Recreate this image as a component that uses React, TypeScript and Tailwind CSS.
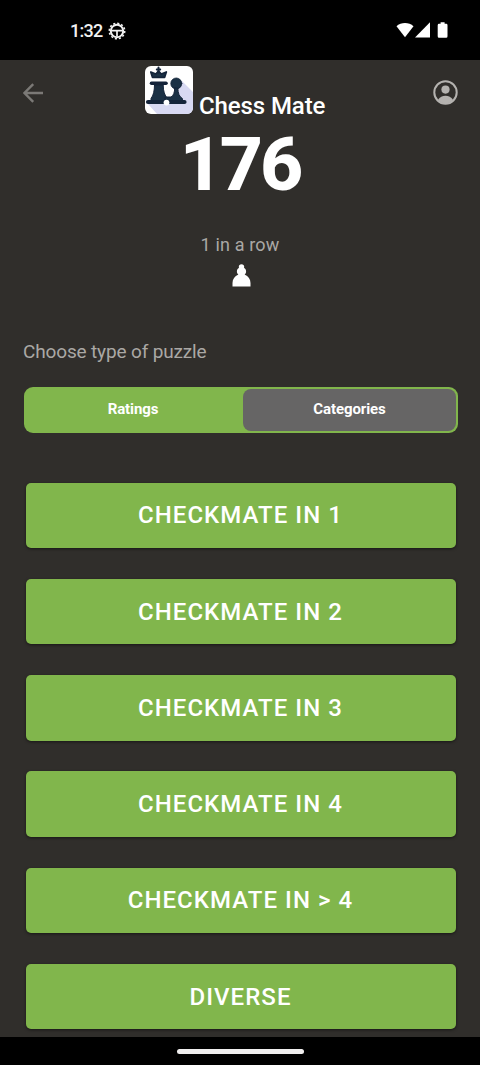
import React, { useState } from 'react';

const categories = [
  'Checkmate in 1',
  'Checkmate in 2',
  'Checkmate in 3',
  'Checkmate in 4',
  'Checkmate in > 4',
  'Diverse',
];

const StatusBar: React.FC = () => (
  <div className="h-[60px] shrink-0 bg-black flex items-center justify-between pl-[70px] pr-8 text-[#f1f1f1]">
    <div className="flex items-center gap-[6px] pt-px">
      <span className="text-[18px] leading-6 font-medium w-[32px] whitespace-nowrap tracking-[-0.7px]">1:32</span>
      <svg className="h-[18px] w-[18px]" viewBox="0 0 18 18" fill="none" stroke="currentColor">
        <circle cx="9" cy="9" r="6.2" strokeWidth="2" />
        <circle cx="9" cy="9" r="7.7" strokeWidth="1.6" strokeDasharray="2.1 1.93" />
        <path d="M3.2 8.6h11.6M9 9v5.5" strokeWidth="1.7" />
      </svg>
    </div>
    <svg className="h-4 w-[52px]" viewBox="0 0 52 16" fill="#fff">
      <path d="M9 15.2 0.5 4.3C5 0 13 0 17.5 4.3Z" />
      <path d="M34 0.2V15.5H19Z" />
      <path d="M44.6 0.2h4v1.6h1.6q1.3 0 1.3 1.4v11q0 1.5-1.3 1.5h-7.2q-1.3 0-1.3-1.5v-11q0-1.4 1.3-1.4h1.6z" />
    </svg>
  </div>
);

const Logo: React.FC = () => (
  <svg className="h-12 w-12 shrink-0" viewBox="0 0 48 48">
    <defs>
      <clipPath id="tile">
        <rect width="48" height="48" rx="6" />
      </clipPath>
    </defs>
    <g clipPath="url(#tile)">
      <rect width="48" height="48" fill="#fff" />
      <path d="M37 15 48 26V48H12L3 38 30 35z" fill="#d8d9f2" />
      <g fill="#1b3145" stroke="#14243a" strokeLinejoin="round" strokeLinecap="round">
        <path d="M7.5 11.3 5.800 6l5 2L13.500 5l2.800 3 5-2-1.700 5.300z" strokeWidth="1.8" />
        <path d="M13.500 1.500v5M11.800 3.400h3.400" strokeWidth="2" />
        <path d="M6.500 17.300h14.500" strokeWidth="3.600" />
        <path d="M9.500 19h8.700q0 9 4.300 13.500v3H6v-3q3.500-4.500 3.500-13.500z" strokeWidth="1" />
        <circle cx="31.300" cy="17.500" r="5.500" strokeWidth="0.8" />
        <path d="M29.700 22h3.200q0 8 4.500 10.500v3H20v-4.500h6q3.700-2 3.700-9z" strokeWidth="1" />
        <path d="M3 36h36.500" strokeWidth="4.200" />
      </g>
      <circle cx="21.500" cy="36.600" r="2.900" fill="#fff" />
    </g>
  </svg>
);

const App: React.FC = () => {
  const [tab, setTab] = useState('Categories');

  return (
    <div className="h-[1065px] w-[480px] overflow-hidden flex flex-col bg-[#302e2b] text-white font-['Roboto',sans-serif]">
      <StatusBar />

      <main className="h-[977px] shrink-0 px-6">
        <header className="h-[60px] flex items-start justify-between">
          <button className="mt-[23px] -ml-px w-[22px]" aria-label="Back">
            <svg className="h-5 w-[22px]" viewBox="0 0 22 20" fill="none" stroke="#7b7976" strokeWidth="2.4">
              <path d="M20 10H1.5M10.2 1.2 1.4 10l8.8 8.8" />
            </svg>
          </button>
          <div className="flex items-start gap-[6px] pt-[6px] pr-[7px]">
            <Logo />
            <h1 className="mt-[26px] w-[127px] whitespace-nowrap text-2xl leading-7 font-medium tracking-[-0.1px]">Chess Mate</h1>
          </div>
          <button className="mt-5 -mr-[2px]" aria-label="Profile">
            <svg className="h-[25px] w-[25px]" viewBox="0 0 25 25" fill="none">
              <circle cx="12.5" cy="12.5" r="11.2" stroke="#b4b2af" strokeWidth="2" />
              <circle cx="12.5" cy="9.6" r="4.1" fill="#b4b2af" />
              <path d="M5 19.7q2.8-4 7.5-4t7.5 4q-3 3.8-7.5 3.8T5 19.7z" fill="#b4b2af" />
            </svg>
          </button>
        </header>

        <div className="flex flex-col items-center pl-[3px]">
          <div className="mt-1 -ml-[3px] text-[75px] leading-[80px] font-extrabold tracking-[-3px]">176</div>
          <div className="mt-[29px] -ml-[3px] text-[18px] leading-6 tracking-[0.15px] text-[#aaa8a5]">1 in a row</div>
          <svg className="mt-[7px] h-[23px] w-[19px]" viewBox="0 0 19 23" fill="#fff">
            <path d="M9.5.3c1.7 0 2.7 1 2.7 2.4 0 .5-.1.8-.3 1.1 1.5.9 2.2 2.1 2.2 3.6 0 1.3-.6 2.4-1.5 3.2 3.8 1.900 5.900 4.700 5.900 8.400v3.500H.5V19c0-3.700 2.100-6.500 5.900-8.400-.9-.8-1.500-1.900-1.500-3.200 0-1.500.7-2.700 2.200-3.600-.2-.3-.3-.6-.3-1.100C6.800 1.300 7.800.3 9.500.3z" />
          </svg>
        </div>

        <p className="mt-[53px] -ml-[1px] text-[19px] leading-6 tracking-[-0.15px] text-[#aaa8a5]">Choose type of puzzle</p>

        <div className="mt-[22.5px] h-[46.5px] w-[434px] rounded-[9px] bg-[#81b64c] p-[2px] flex">
          {['Ratings', 'Categories'].map((name) => (
            <button
              key={name}
              onClick={() => setTab(name)}
              className={`rounded-[8px] pb-px text-[15px] font-bold tracking-[-0.1px] ${name === 'Ratings' ? 'w-[217px] pr-[3px]' : 'flex-1'} ${tab === name ? 'bg-[#666565]' : ''}`}
            >
              {name}
            </button>
          ))}
        </div>

        <div className="mt-[49.5px] ml-[1.5px] w-[430px] flex flex-col gap-[30.75px]">
          {categories.map((name) => (
            <button
              key={name}
              className="h-[65.5px] shrink-0 rounded-[5px] bg-[#81b64c] text-2xl font-medium uppercase tracking-[1.05px] shadow-[0_1px_3px_rgba(0,0,0,0.5)]"
            >
              {name}
            </button>
          ))}
        </div>
      </main>

      <div className="h-7 shrink-0 bg-black flex items-center justify-center">
        <div className="h-[5px] w-[127px] rounded-full bg-[#f0eeee]" />
      </div>
    </div>
  );
};

export default App;
